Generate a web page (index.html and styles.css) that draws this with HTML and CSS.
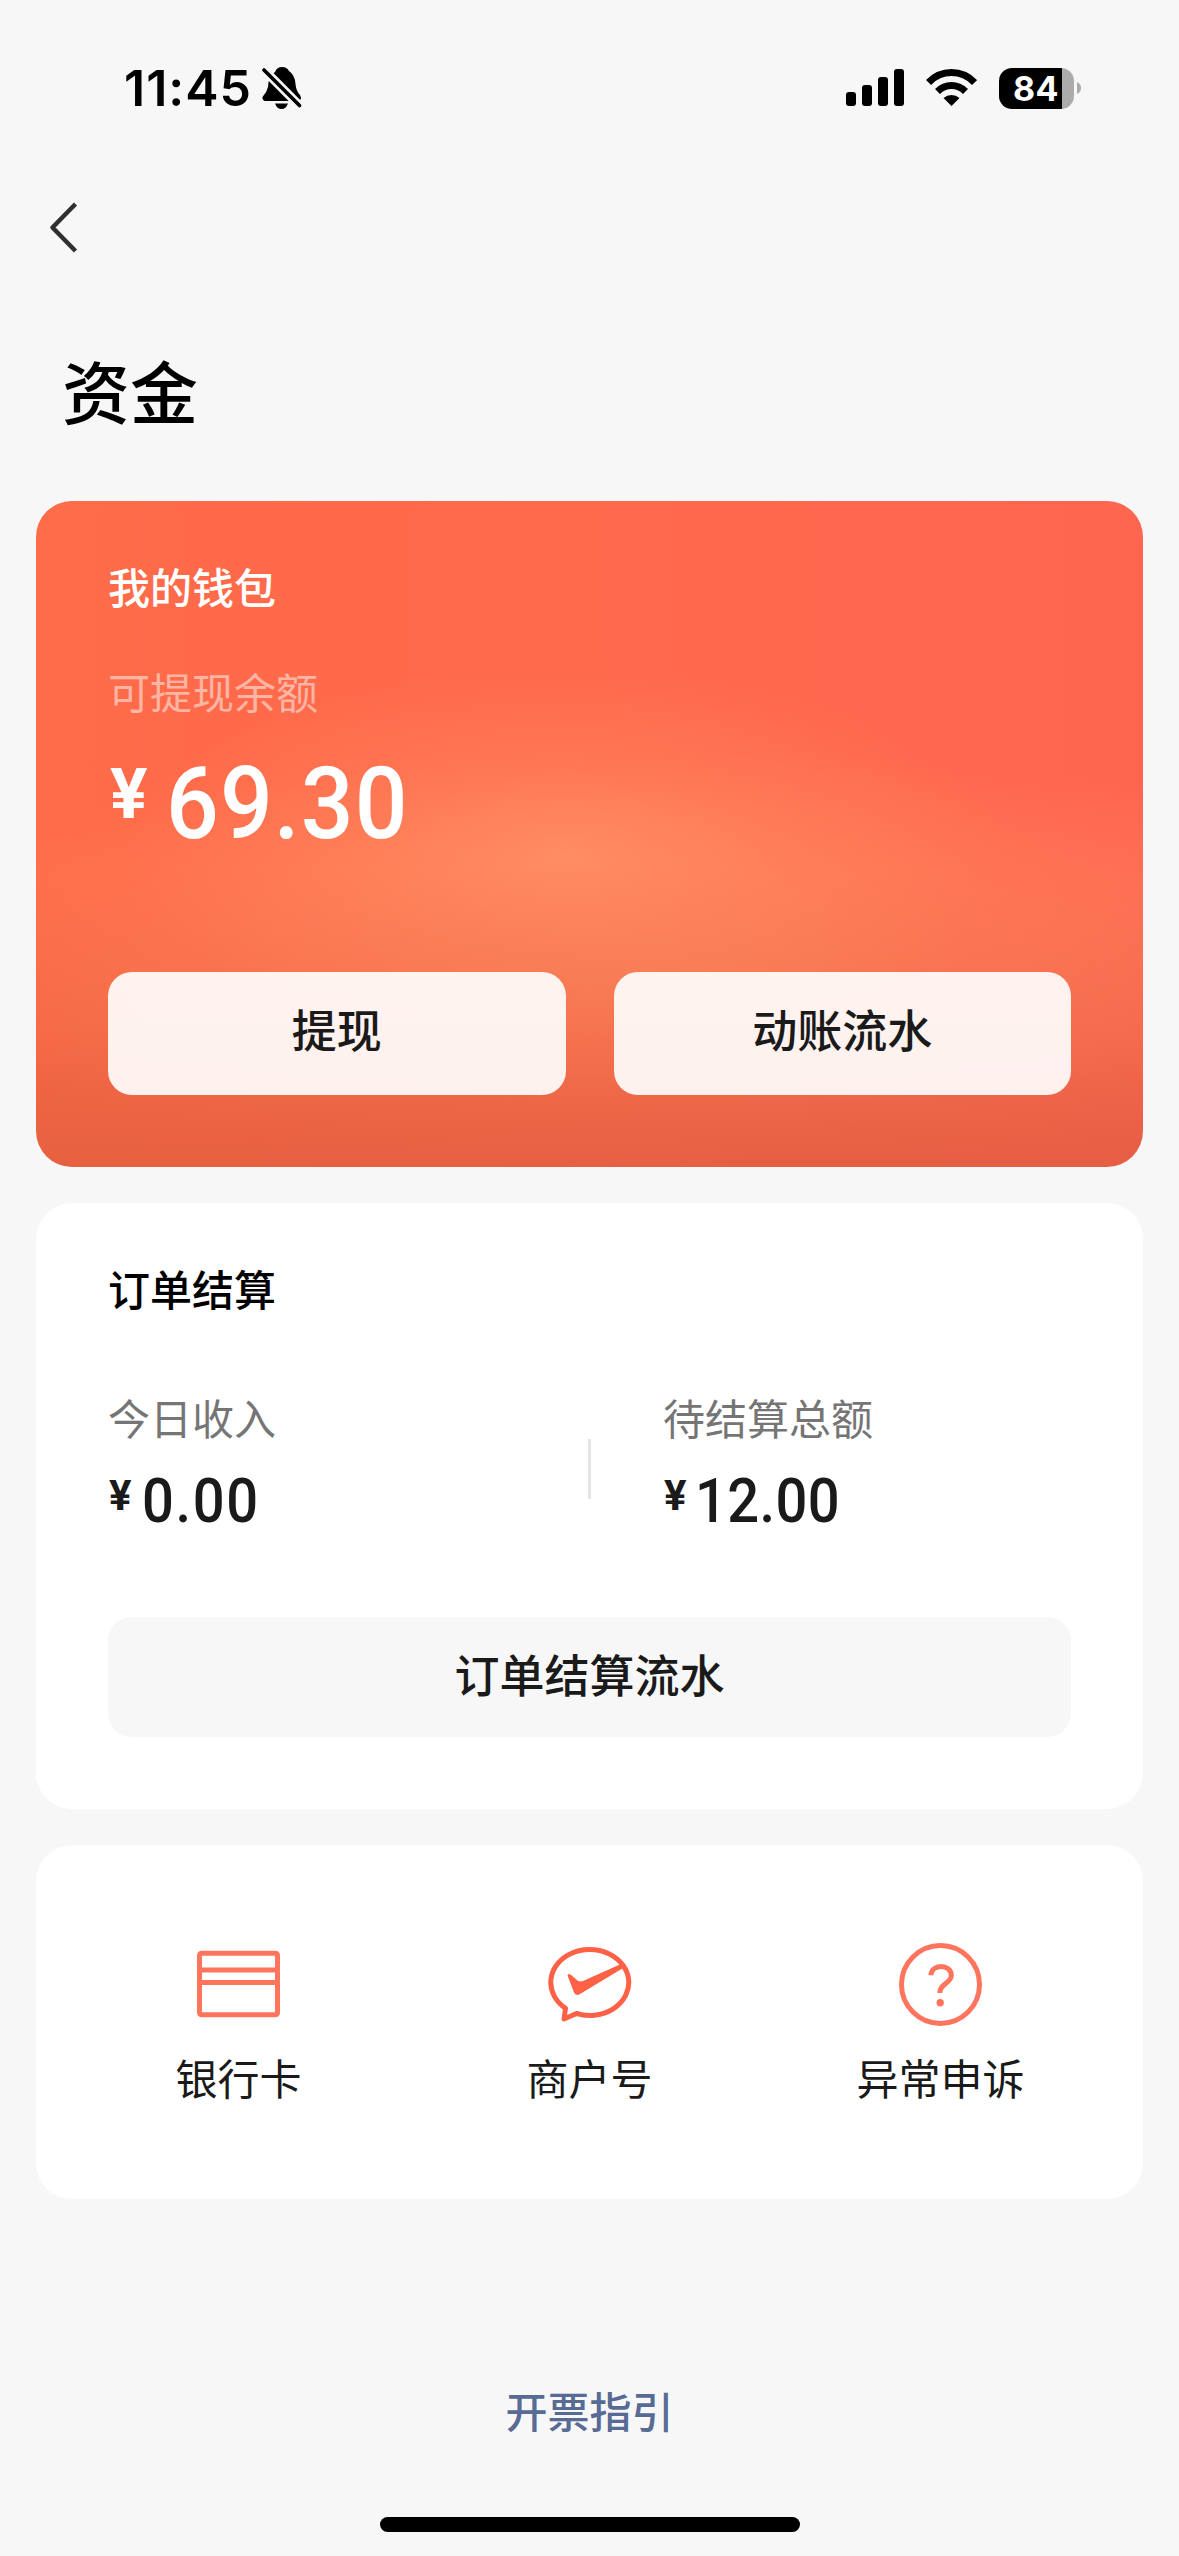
FILE: index.html
```html
<!DOCTYPE html>
<html lang="zh-CN">
<head>
<meta charset="utf-8">
<title>资金</title>
<link rel="stylesheet" href="styles.css">
</head>
<body>
<div class="screen">
  <header class="status">
    <div class="status-left">
      <span class="time">11:45</span>
      <svg class="bell" width="40" height="44" viewBox="0 0 40 44">
        <path d="M13 6Q15 1 20 1Q25 1 27 5Q33 9 33.500 18Q34 25 38 29Q39 31 39 33L36.500 35H3Q0 34 .5 31Q5 26 6 21Q6 11 13 6Z"/>
        <path d="M13 37.500H26Q24 43 19.500 43Q15 43 13 37.500Z"/>
        <path d="M2 4L38 40" stroke="#f7f7f7" stroke-width="9"/>
        <path d="M2 4L37.500 39.500" stroke="#000" stroke-width="3.600" stroke-linecap="round"/>
      </svg>
    </div>
    <div class="status-right">
      <svg width="58" height="38" viewBox="0 0 58 38">
        <rect y="23" width="10" height="14" rx="3"/><rect x="16" y="16" width="10" height="21" rx="3"/><rect x="32" y="8" width="10" height="29" rx="3"/><rect x="48" width="10" height="37" rx="3"/>
      </svg>
      <svg class="wifi" width="51" height="38" viewBox="0 0 51 38">
        <g fill="none" stroke="#000" stroke-width="7">
          <path d="M2.500 13.500Q12 3.500 25.500 3.500T48.500 13.500"/>
          <path d="M11.500 22.500Q17.500 16.500 25.500 16.500T39.500 22.500"/>
        </g>
        <path d="M25.500 37L17.500 29Q21 26 25.500 26T33.500 29Z"/>
      </svg>
      <div class="battery"><span class="level">84</span><svg class="tip" width="4" height="12" viewBox="0 0 4 12"><path d="M0 0Q4 2 4 6T0 12Z" fill="#ababab"/></svg></div>
    </div>
  </header>
  <nav class="nav">
    <svg width="30" height="52" viewBox="0 0 30 52"><path d="M26.500 2L3.500 25.500L26.500 49" fill="none" stroke="#303030" stroke-width="4.500" stroke-linejoin="round"/></svg>
  </nav>
  <h1 class="title">资金</h1>
  <main class="cards">
    <section class="card wallet">
      <h2 class="card-title">我的钱包</h2>
      <p class="label">可提现余额</p>
      <p class="amount big"><span class="yen">¥</span><span class="num">69.30</span></p>
      <div class="actions">
        <button class="btn">提现</button>
        <button class="btn">动账流水</button>
      </div>
    </section>
    <section class="card orders">
      <h2 class="card-title">订单结算</h2>
      <div class="stats">
        <div class="stat">
          <p class="label">今日收入</p>
          <p class="amount"><span class="yen">¥</span><span class="num">0.00</span></p>
        </div>
        <div class="divider"></div>
        <div class="stat">
          <p class="label">待结算总额</p>
          <p class="amount"><span class="yen">¥</span><span class="num tight">12.00</span></p>
        </div>
      </div>
      <button class="btn grey">订单结算流水</button>
    </section>
    <section class="card links">
      <a class="link">
        <svg width="84" height="84" viewBox="0 0 84 84" fill="none" stroke="#ff745c" stroke-width="5">
          <rect x="2.500" y="10.300" width="78" height="61.400" rx="2"/><path d="M3 27H81M3 39.500H81"/>
        </svg>
        <span>银行卡</span>
      </a>
      <a class="link">
        <svg width="84" height="84" viewBox="0 0 84 84">
          <path d="M28.500 70.500A39 33 0 1 0 17.500 65.300L16 76Z" fill="none" stroke="#ff6146" stroke-width="5" stroke-linejoin="round"/>
          <path d="M19.500 32.500Q20 30 22.500 31.500L29.500 37.500Q32 39 35 38L73 21L76 24.500L32 51Q28 53.500 26 49.500Z" fill="#ff6146"/>
        </svg>
        <span>商户号</span>
      </a>
      <a class="link">
        <svg width="84" height="84" viewBox="0 0 84 84">
          <circle cx="41.500" cy="41.500" r="39" fill="none" stroke="#ff745c" stroke-width="5"/>
          <path d="M32 32.200C32 20.500 52.300 20.500 52.300 32.500C52.300 40.500 40.800 40 40.800 50" fill="none" stroke="#ff745c" stroke-width="5"/>
          <circle cx="41.200" cy="59.700" r="3.700" fill="#ff745c"/>
        </svg>
        <span>异常申诉</span>
      </a>
    </section>
  </main>
  <a class="guide">开票指引</a>
  <div class="home"></div>
</div>
</body>
</html>
```
FILE: styles.css
```css
* { box-sizing: border-box; margin: 0; padding: 0; }
body { background: #f7f7f7; }
.screen {
  width: 1179px; height: 2556px; display: flex; flex-direction: column;
  background: #f7f7f7; color: #1a1a1a;
  font-family: "Noto Sans CJK SC", sans-serif; font-size: 42px; line-height: 60px;
}
.status { height: 176px; padding: 0 98px 0 124px; display: flex; justify-content: space-between; }
.status-left, .status-right { display: flex; align-items: center; height: 176px; }
.time { font: 600 50px/60px Inter, sans-serif; color: #000; letter-spacing: 1px; }
.bell { margin-left: 10px; }
.status-right svg { display: block; }
.wifi { margin-left: 22px; }
.battery { display: flex; align-items: center; margin-left: 22px; }
.level {
  width: 75px; height: 41px; border-radius: 13px; text-align: center; padding-right: 1px;
  background: linear-gradient(90deg, #000 63px, #ababab 63px);
  color: #fff; font: 700 34px/41px Inter, sans-serif; letter-spacing: 0.5px;
}
.tip { margin-left: 3px; }
.nav { height: 104px; padding: 26px 0 0 49px; }
.nav svg { display: block; }
.title { height: 221px; padding: 61px 62px 0; font-size: 68px; line-height: 98px; font-weight: 500; color: #000; }
.cards { display: flex; flex-direction: column; gap: 36px; padding: 0 36px; }
.card { border-radius: 36px; background: #fff; padding: 0 72px; }
.card-title { font-size: 42px; line-height: 60px; font-weight: 500; color: #000; }
.wallet {
  height: 666px; padding-top: 55px;
  background:
    linear-gradient(180deg, rgba(205, 85, 55, 0) 55%, rgba(205, 85, 55, .2) 80%, rgba(205, 85, 55, .5) 100%),
    radial-gradient(440px 190px at 530px 355px, rgba(255, 152, 108, .65), rgba(255, 150, 105, .3) 45%, rgba(255, 150, 105, 0) 100%),
    radial-gradient(820px 210px at 640px 460px, rgba(255, 150, 100, .5), rgba(255, 150, 100, .3) 50%, rgba(255, 150, 100, 0) 100%),
    linear-gradient(90deg, #ff6c49, #ff6650);
}
.wallet .card-title { color: #fff; }
.wallet .label { margin-top: 45px; color: rgba(255, 255, 255, .5); }
.amount { display: flex; align-items: flex-start; font-family: Roboto, sans-serif; font-weight: 500; }
.num { transform: scaleX(.92); transform-origin: left; }
.big { height: 130px; color: #fff; }
.big .yen { font-size: 70px; line-height: 70px; font-weight: 700; padding: 38px 0 0 2px; width: 58px; }
.big .num { font-size: 101px; line-height: 120px; padding-top: 23px; letter-spacing: 1.2px; }
.actions { display: flex; gap: 48px; margin-top: 121px; }
.btn {
  flex: 1; height: 123px; border: 0; border-radius: 24px; padding-bottom: 9px;
  background: rgba(255, 255, 255, .91); color: #1a1a1a;
  font-family: inherit; font-size: 45px; line-height: 66px; font-weight: 500;
}
.orders { height: 606px; padding-top: 55px; }
.stats { display: flex; height: 230px; margin-top: 69px; }
.stats .label { color: #757575; }
.stat { width: 480px; }
.divider { width: 3px; height: 60px; margin: 52px 72px 0 0; background: #e5e5e5; }
.stats .divider + .stat { width: auto; }
.stats .yen { font-size: 42px; line-height: 42px; padding: 28px 0 0 1px; width: 34px; font-weight: 700; }
.stats .num { font-size: 61px; line-height: 72px; padding-top: 18px; letter-spacing: 1.8px; }
.stats .tight { letter-spacing: .4px; margin-left: -2px; }
.orders .btn { display: block; width: 100%; height: 120px; padding-bottom: 7px; }
.orders .grey { background: #f7f7f7; }
.links { height: 354px; padding: 98px 27px 0; display: flex; }
.link { flex: 1; display: flex; flex-direction: column; align-items: center; gap: 20px; }
.guide { align-self: center; margin-top: 181px; color: #576b95; font-weight: 500; }
.home { align-self: center; width: 420px; height: 15px; border-radius: 8px; background: #000; margin-top: 77px; }
```
